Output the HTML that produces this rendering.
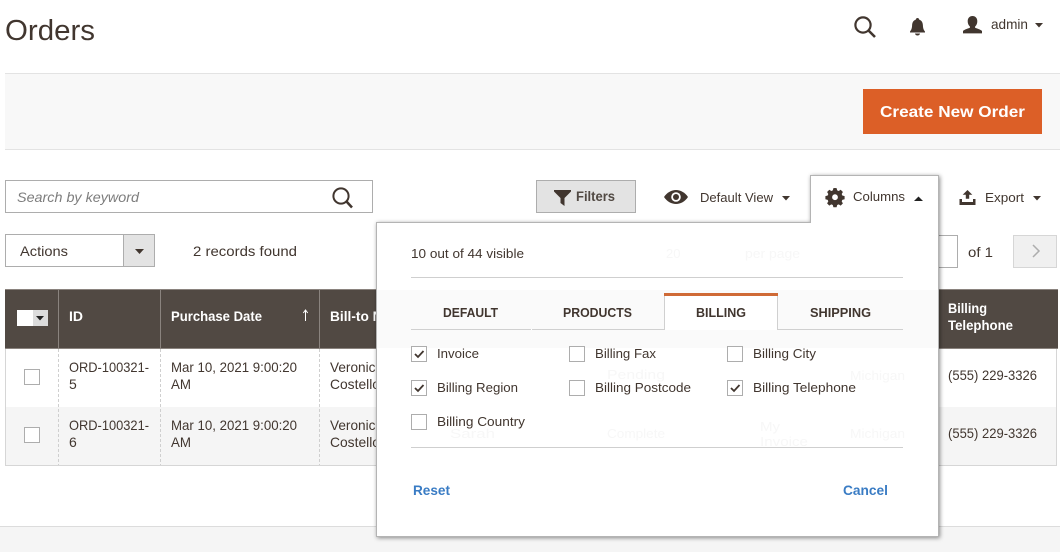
<!DOCTYPE html>
<html lang="en"><head><meta charset="utf-8"><title>Orders</title>
<style>
html,body{margin:0;padding:0;background:#fff;width:1060px;height:552px;overflow:hidden}
svg{display:block}
text{font-family:"Liberation Sans",sans-serif;font-size:14px;fill:#41362f}
.b{font-weight:700}
.w{fill:#fff}
.g{fill:#f7f7f7;font-size:13px}
</style></head><body>
<svg xmlns="http://www.w3.org/2000/svg" width="1060" height="552" viewBox="0 0 1060 552">
<defs>
<filter id="sh" x="-5%" y="-5%" width="110%" height="110%"><feDropShadow dx="1" dy="1" stdDeviation="2" flood-color="#000" flood-opacity=".45"/></filter>
</defs>
<rect width="1060" height="552" fill="#fff"/>
<!-- header -->
<text x="5" y="40" style="font-size:29px" textLength="90" lengthAdjust="spacingAndGlyphs">Orders</text>
<g fill="none" stroke="#41362f" stroke-width="2.2"><circle cx="863" cy="25" r="7.6"/><path d="M868.5 30.5L875 37" stroke-width="2.6"/></g>
<path d="M917.5 18c-1 0-1.600.7-1.700 1.600-2.500.8-3.600 3-3.700 5.600-.1 3.300-.9 4.800-2.100 6.300v1h15v-1c-1.200-1.500-2-3-2.100-6.300-.1-2.600-1.200-4.800-3.700-5.600-.1-.9-.7-1.600-1.700-1.600z" fill="#41362f"/>
<path d="M915 33.500h5c-.2 1.300-1.200 2-2.500 2s-2.300-.7-2.500-2z" fill="#41362f"/>
<path d="M972.500 16c-3 0-4.800 2.200-4.800 5.200 0 2.300.8 4 2.200 5.300v1.300c-2.200.9-5.400 1.700-6.900 3.200v2.400h19v-2.400c-1.500-1.500-4.700-2.300-6.900-3.200v-1.300c1.400-1.300 2.200-3 2.200-5.300 0-3-1.800-5.200-4.800-5.200z" fill="#41362f"/>
<text x="991" y="29" textLength="37" lengthAdjust="spacingAndGlyphs" style="font-size:14px">admin</text>
<path d="M1035 23h8l-4 4.500z" fill="#41362f"/>
<!-- action band -->
<rect x="5" y="73" width="1055" height="77" fill="#f8f8f8"/>
<rect x="5" y="73" width="1055" height="1" fill="#e3e3e3"/>
<rect x="5" y="149" width="1055" height="1" fill="#e3e3e3"/>
<rect x="863" y="89" width="179" height="45" fill="#dc5f27"/>
<text x="880" y="117" class="b w" style="font-size:16px" textLength="145" lengthAdjust="spacingAndGlyphs">Create New Order</text>
<!-- search -->
<rect x="5.500" y="180.500" width="367" height="32" fill="#fff" stroke="#adadad"/>
<text x="17" y="202" style="font-size:14px;font-style:italic;fill:#7d7d7d" textLength="122" lengthAdjust="spacingAndGlyphs">Search by keyword</text>
<g fill="none" stroke="#41362f" stroke-width="2"><circle cx="341" cy="196" r="7.600"/><path d="M346.500 201.500L352 207.500" stroke-width="2.500"/></g>
<!-- filters -->
<rect x="536.500" y="180.500" width="99" height="32" fill="#e3e3e3" stroke="#adadad"/>
<path d="M554 190h17v1.500l-6.500 6.500v8l-4-3v-5l-6.500-6.500z" fill="#41362f"/>
<text x="576" y="201" class="b" style="font-size:14px;fill:#514943" textLength="39" lengthAdjust="spacingAndGlyphs">Filters</text>
<!-- view -->
<path d="M664 197c3-4.500 7.500-7 12-7s9 2.500 12 7c-3 4.500-7.500 7-12 7s-9-2.500-12-7z" fill="#41362f"/>
<circle cx="676" cy="197" r="4.800" fill="#fff"/><circle cx="676" cy="197" r="3" fill="#41362f"/>
<text x="700" y="202" style="font-size:13px" textLength="73" lengthAdjust="spacingAndGlyphs">Default View</text>
<path d="M782 196h8l-4 4.500z" fill="#41362f"/>
<!-- export -->
<path d="M967.500 190l4.800 4.800h-3.100v4h-3.400v-4h-3.100zM959.500 199h2.500v3h11v-3h2.500v6h-16z" fill="#41362f"/>
<text x="985" y="202" style="font-size:13px" textLength="39" lengthAdjust="spacingAndGlyphs">Export</text>
<path d="M1033 196h8l-4 4.500z" fill="#41362f"/>
<!-- actions -->
<rect x="5.500" y="234.500" width="149" height="32" fill="#fff" stroke="#adadad"/>
<rect x="123.500" y="234.500" width="31" height="32" fill="#e3e3e3" stroke="#adadad"/>
<path d="M135 249h9l-4.500 5z" fill="#41362f"/>
<text x="20" y="256" textLength="48" lengthAdjust="spacingAndGlyphs">Actions</text>
<text x="193" y="256" textLength="104" lengthAdjust="spacingAndGlyphs">2 records found</text>
<!-- pager -->
<rect x="900.500" y="235.500" width="57" height="32" fill="#fff" stroke="#adadad"/>
<text x="968" y="257" textLength="25" lengthAdjust="spacingAndGlyphs">of 1</text>
<rect x="1013.500" y="235.500" width="43" height="32" fill="#f0f0f0" stroke="#d6d6d6"/>
<path d="M1033 245l6 6-6 6" fill="none" stroke="#adadad" stroke-width="1.500"/>
<!-- table -->
<rect x="5" y="349" width="1052" height="58" fill="#fff"/>
<rect x="5" y="407" width="1052" height="58" fill="#f5f5f5"/>
<path d="M5.500 349v116.500H1056.500V349" fill="none" stroke="#d6d6d6"/>
<rect x="5" y="289" width="1053" height="60" fill="#514943"/>
<rect x="5" y="289" width="1053" height="1" fill="#8a837e"/>
<rect x="5" y="348" width="1053" height="1" fill="#8a837e"/>
<g fill="#8a837e"><rect x="58" y="289" width="1" height="60"/><rect x="160" y="289" width="1" height="60"/><rect x="319" y="289" width="1" height="60"/></g>
<g stroke="#cfcfcf" stroke-dasharray="3 2"><path d="M58.500 349v116M160.500 349v116M319.500 349v116"/></g>
<rect x="17" y="310" width="16" height="16" fill="#fff"/><rect x="33" y="310" width="15" height="16" fill="#dcdcdc"/>
<path d="M36 316h8l-4 4.500z" fill="#222"/>
<text x="69" y="321" class="b w" textLength="14" lengthAdjust="spacingAndGlyphs">ID</text>
<text x="171" y="321" class="b w" textLength="91" lengthAdjust="spacingAndGlyphs">Purchase Date</text>
<path d="M305.500 321v-10.500M303.300 313l2.200-3 2.200 3" fill="none" stroke="#fff" stroke-width="1"/>
<text x="330" y="321" class="b w" style="font-size:13.500px" textLength="80" lengthAdjust="spacingAndGlyphs">Bill-to Name</text>
<text x="948" y="313" class="b w" textLength="39" lengthAdjust="spacingAndGlyphs">Billing</text>
<text x="948" y="330" class="b w" textLength="65" lengthAdjust="spacingAndGlyphs">Telephone</text>
<rect x="24.500" y="369.500" width="15" height="15" fill="#fff" stroke="#adadad"/>
<rect x="24.500" y="427.500" width="15" height="15" fill="#fff" stroke="#adadad"/>
<text x="69" y="372" textLength="80" lengthAdjust="spacingAndGlyphs">ORD-100321-</text>
<text x="69" y="389">5</text>
<text x="171" y="372" textLength="126" lengthAdjust="spacingAndGlyphs">Mar 10, 2021 9:00:20</text>
<text x="171" y="389" textLength="20" lengthAdjust="spacingAndGlyphs">AM</text>
<text x="330" y="372" textLength="53" lengthAdjust="spacingAndGlyphs">Veronica</text>
<text x="330" y="389" textLength="50" lengthAdjust="spacingAndGlyphs">Costello</text>
<text x="948" y="380" textLength="89" lengthAdjust="spacingAndGlyphs">(555) 229-3326</text>
<text x="69" y="430" textLength="80" lengthAdjust="spacingAndGlyphs">ORD-100321-</text>
<text x="69" y="447">6</text>
<text x="171" y="430" textLength="126" lengthAdjust="spacingAndGlyphs">Mar 10, 2021 9:00:20</text>
<text x="171" y="447" textLength="20" lengthAdjust="spacingAndGlyphs">AM</text>
<text x="330" y="430" textLength="53" lengthAdjust="spacingAndGlyphs">Veronica</text>
<text x="330" y="447" textLength="50" lengthAdjust="spacingAndGlyphs">Costello</text>
<text x="948" y="438" textLength="89" lengthAdjust="spacingAndGlyphs">(555) 229-3326</text>
<!-- footer -->
<rect x="0" y="526" width="1060" height="26" fill="#f5f5f5"/>
<rect x="0" y="526" width="1060" height="1" fill="#dcdcdc"/>
<!-- columns panel -->
<path d="M376.500 222.500H810.500V175.500H938.500V536.500H376.500z" fill="#fff" stroke="#b4b4b4" filter="url(#sh)"/>
<rect x="377" y="290" width="561" height="58" fill="#fafafa"/>
<text x="666" y="258" class="g">20</text>
<text x="745" y="258" class="g" textLength="55" lengthAdjust="spacingAndGlyphs">per page</text>
<text x="607" y="379" class="g" textLength="58" lengthAdjust="spacingAndGlyphs">Pending</text>
<text x="850" y="380" class="g" textLength="55" lengthAdjust="spacingAndGlyphs">Michigan</text>
<text x="607" y="438" class="g" textLength="58" lengthAdjust="spacingAndGlyphs">Complete</text>
<text x="850" y="438" class="g" textLength="55" lengthAdjust="spacingAndGlyphs">Michigan</text>
<text x="760" y="431" class="g" textLength="20" lengthAdjust="spacingAndGlyphs">My</text>
<text x="760" y="446" class="g" textLength="48" lengthAdjust="spacingAndGlyphs">Invoice</text>
<text x="450" y="438" class="g" textLength="45" lengthAdjust="spacingAndGlyphs">Sarah</text>
<!-- tab top -->
<g fill="#41362f">
<path d="M835 188l1.600.1.600 2.300 1.500.6 2-1.200 2.200 2.200-1.200 2 .6 1.500 2.300.6v3.200l-2.300.6-.6 1.500 1.200 2-2.200 2.200-2-1.200-1.500.6-.6 2.300h-3.200l-.6-2.300-1.500-.6-2 1.200-2.200-2.200 1.200-2-.6-1.500-2.300-.6v-3.200l2.300-.6.6-1.500-1.200-2 2.200-2.200 2 1.200 1.500-.6.600-2.300zm0 6.300a2.900 2.900 0 1 0 0 5.800 2.900 2.900 0 0 0 0-5.800z" fill-rule="evenodd"/>
</g>
<text x="853" y="201" style="font-size:13px" textLength="52" lengthAdjust="spacingAndGlyphs">Columns</text>
<path d="M914 201h9l-4.500-4.500z" fill="#222"/>
<text x="411" y="258" style="font-size:13px" textLength="113" lengthAdjust="spacingAndGlyphs">10 out of 44 visible</text>
<rect x="411" y="277" width="492" height="1" fill="#cfcfcf"/>
<!-- tabs -->
<path d="M411 329.500H664.500V294.500H777.500V329.500H903" fill="none" stroke="#d0d0d0"/>
<rect x="531" y="329" width="1" height="1" fill="#fff"/>
<rect x="664" y="293" width="114" height="3" fill="#cf6a36"/>
<rect x="665" y="296" width="112" height="34" fill="#fff"/>
<text x="443" y="317" class="b" style="font-size:13px" textLength="55" lengthAdjust="spacingAndGlyphs">DEFAULT</text>
<text x="563" y="317" class="b" style="font-size:13px" textLength="69" lengthAdjust="spacingAndGlyphs">PRODUCTS</text>
<text x="696" y="317" class="b" style="font-size:13px" textLength="50" lengthAdjust="spacingAndGlyphs">BILLING</text>
<text x="810" y="317" class="b" style="font-size:13px" textLength="61" lengthAdjust="spacingAndGlyphs">SHIPPING</text>
<!-- checkboxes -->
<g fill="#fff" stroke="#adadad">
<rect x="411.500" y="346.500" width="15" height="15"/><rect x="569.500" y="346.500" width="15" height="15"/><rect x="727.500" y="346.500" width="15" height="15"/>
<rect x="411.500" y="380.500" width="15" height="15"/><rect x="569.500" y="380.500" width="15" height="15"/><rect x="727.500" y="380.500" width="15" height="15"/>
<rect x="411.500" y="414.500" width="15" height="15"/>
</g>
<g fill="none" stroke="#41362f" stroke-width="1.800">
<path d="M415 354l3 3 5.500-6"/><path d="M415 388l3 3 5.500-6"/><path d="M731 388l3 3 5.500-6"/>
</g>
<text x="437" y="358" style="font-size:13px" textLength="42" lengthAdjust="spacingAndGlyphs">Invoice</text>
<text x="595" y="358" style="font-size:13px" textLength="61" lengthAdjust="spacingAndGlyphs">Billing Fax</text>
<text x="753" y="358" style="font-size:13px" textLength="63" lengthAdjust="spacingAndGlyphs">Billing City</text>
<text x="437" y="392" style="font-size:13px" textLength="81" lengthAdjust="spacingAndGlyphs">Billing Region</text>
<text x="595" y="392" style="font-size:13px" textLength="96" lengthAdjust="spacingAndGlyphs">Billing Postcode</text>
<text x="753" y="392" style="font-size:13px" textLength="103" lengthAdjust="spacingAndGlyphs">Billing Telephone</text>
<text x="437" y="426" style="font-size:13px" textLength="88" lengthAdjust="spacingAndGlyphs">Billing Country</text>
<rect x="411" y="447" width="492" height="1" fill="#cfcfcf"/>
<text x="413" y="495" class="b" style="font-size:14px;fill:#3a7cc4" textLength="37" lengthAdjust="spacingAndGlyphs">Reset</text>
<text x="843" y="495" class="b" style="font-size:14px;fill:#3a7cc4" textLength="45" lengthAdjust="spacingAndGlyphs">Cancel</text>
</svg>
</body></html>
